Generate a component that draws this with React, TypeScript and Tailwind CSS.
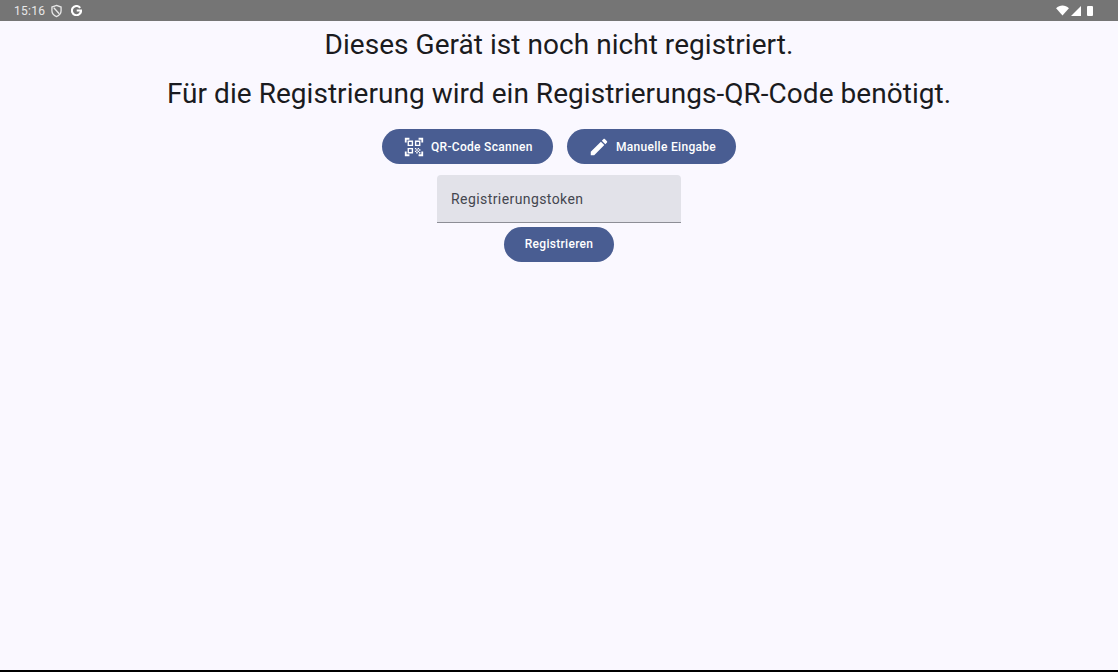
function QrScanIcon() {
    return (
        <svg width="22" height="22" viewBox="0 0 24 24" fill="white">
            <path d="M9.500 6.500v3h-3v-3h3M11 5H5v6h6V5zm-1.500 9.500v3h-3v-3h3M11 13H5v6h6v-6zm6.500-6.500v3h-3v-3h3M19 5h-6v6h6V5zm-6 8h1.500v1.500H13V13zm1.500 1.500H16V16h-1.500v-1.500zM16 13h1.500v1.500H16V13zm-3 3h1.500v1.500H13V16zm1.500 1.500H16V19h-1.500v-1.500zM16 16h1.500v1.500H16V16zm1.500-1.500H19V16h-1.500v-1.500zm0 3H19V19h-1.500v-1.500zM22 7h-2V4h-3V2h5v5zm0 15v-5h-2v3h-3v2h5zM2 22h5v-2H4v-3H2v5zM2 2v5h2V4h3V2H2z" />
        </svg>
    )
}

function PencilIcon() {
    return (
        <svg width="22" height="22" viewBox="0 0 24 24" fill="white">
            <path d="M3 17.250V21h3.750L17.810 9.940l-3.750-3.750L3 17.250zM20.710 7.040c.390-.390.390-1.020 0-1.410l-2.340-2.340c-.390-.390-1.020-.390-1.410 0l-1.830 1.830 3.750 3.750 1.830-1.830z" />
        </svg>
    )
}

function StatusBar() {
    return (
        <div className="h-[21px] bg-[#757575] flex items-center justify-between pl-[14px] pr-[25px] shrink-0">
            <div className="flex items-center">
                <span className="text-[12px] text-[#e8e8e8] tracking-[0.3px] mr-[5px]">15:16</span>
                <svg width="13" height="14" viewBox="0 0 24 26" fill="none" stroke="#e8e8e8" strokeWidth="2.400">
                    <path d="M12 2.500l8.500 3.200v7c0 4.800-3.400 8.600-8.500 10.600-5.100-2-8.500-5.800-8.500-10.600v-7L12 2.500z" />
                    <path d="M7 7l10 11" />
                </svg>
                <svg className="ml-[8px]" width="11" height="11" viewBox="0 0 24 24" fill="none" stroke="white" strokeWidth="4.600">
                    <path d="M20 6.200A10 10 0 1 0 22 12H12.500" />
                </svg>
            </div>
            <div className="flex items-center">
                <svg width="13" height="11" viewBox="0 0 14 12" fill="white">
                    <path d="M0 3.500C2 1.500 4.500.5 7 .5s5 1 7 3L7 11.500 0 3.500z" />
                </svg>
                <svg className="ml-[1px]" width="12" height="12" viewBox="0 0 12 12" fill="white">
                    <path d="M11 1v10H1L11 1z" />
                </svg>
                <div className="ml-[5px] w-[6px] h-[10px] bg-white rounded-[1px]" />
            </div>
        </div>
    )
}

export default function App() {
    const buttonClass = "h-[35px] rounded-full bg-[#495d92] text-white text-[12px] font-medium flex items-center tracking-[0.3px]"

    return (
        <div className="w-[1118px] h-[672px] flex flex-col bg-[#faf8ff] font-['Roboto',sans-serif] overflow-hidden">
            <StatusBar />
            <div className="flex-1 flex flex-col items-center">
                <h1 className="mt-[6px] text-[28px] leading-[36px] tracking-[0.04px] text-[#1a1b20]">Dieses Gerät ist noch nicht registriert.</h1>
                <h2 className="mt-[13px] text-[28px] leading-[36px] tracking-[0.04px] text-[#1a1b20]">Für die Registrierung wird ein Registrierungs-QR-Code benötigt.</h2>
                <div className="mt-[17px] flex gap-[14px]">
                    <button className={buttonClass + " w-[171px] pl-[21px]"}>
                        <QrScanIcon />
                        <span className="ml-[6px]">QR-Code Scannen</span>
                    </button>
                    <button className={buttonClass + " w-[169px] pl-[21px]"}>
                        <PencilIcon />
                        <span className="ml-[6px]">Manuelle Eingabe</span>
                    </button>
                </div>
                <div className="mt-[11px] w-[244px] h-[48px] bg-[#e2e2e9] rounded-t-[4px] border-b-[1.500px] border-[#8d8e96] flex items-center px-[14px]">
                    <span className="text-[14px] mt-[1px] text-[#44464f] tracking-[0.42px]">Registrierungstoken</span>
                </div>
                <button className={buttonClass + " mt-[4px] w-[110px] justify-center pb-[1px]"}>Registrieren</button>
            </div>
            <div className="h-[2px] bg-black shrink-0" />
        </div>
    )
}
